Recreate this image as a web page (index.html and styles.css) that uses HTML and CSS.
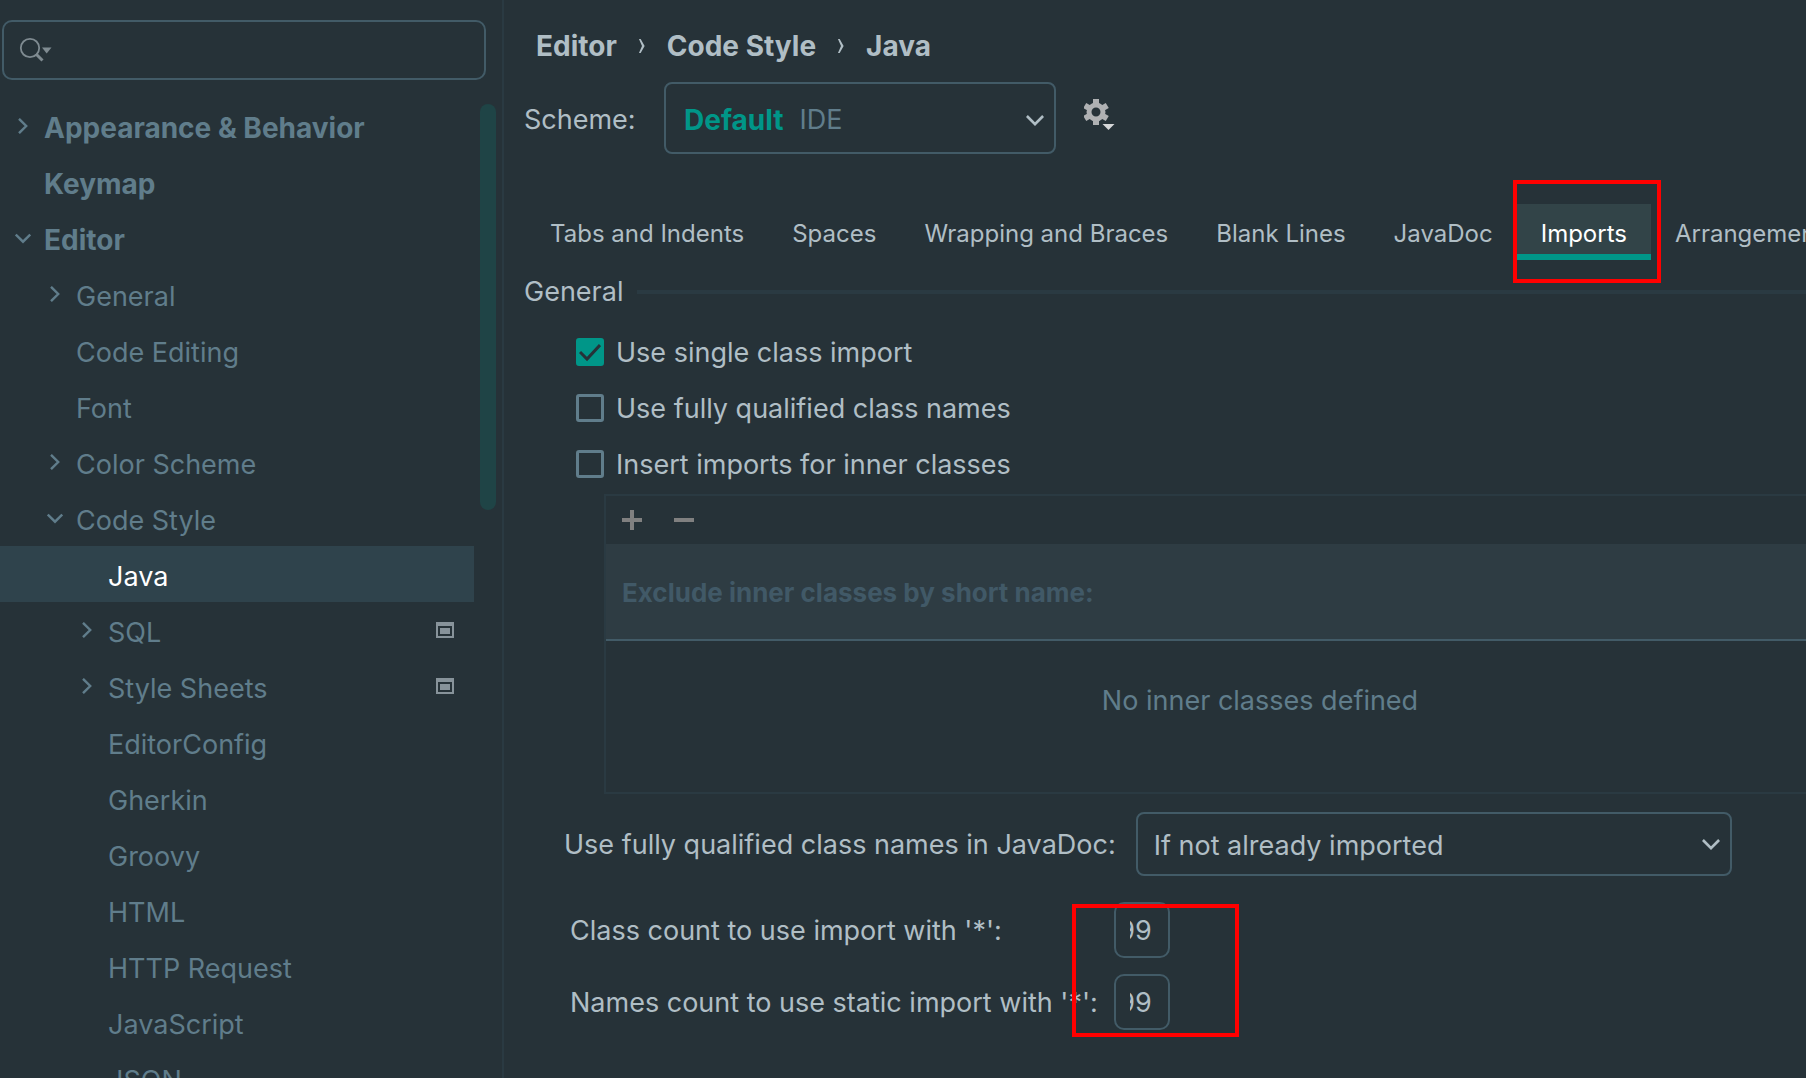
FILE: index.html
```
<!DOCTYPE html>
<html lang="en">
<head>
<meta charset="utf-8">
<title>Settings – Code Style – Java</title>
<link rel="stylesheet" href="styles.css">
</head>
<body>
<svg class="sprite" aria-hidden="true">
  <symbol id="right" viewBox="0 0 16 16"><path d="M4 0.8 L11.2 8 L4 15.2" fill="none" stroke="currentColor" stroke-width="2.4"/></symbol>
  <symbol id="down" viewBox="0 0 16 16"><path d="M0.8 4.5 L8 11.7 L15.2 4.5" fill="none" stroke="currentColor" stroke-width="2.4"/></symbol>
  <symbol id="crumb" viewBox="0 0 8 16"><path d="M0.500 0H2.500L7 8L2.500 16H0.500L4 8Z" fill="currentColor"/></symbol>
  <symbol id="project" viewBox="0 0 18 16"><path fill="currentColor" fill-rule="evenodd" d="M0 0H18V16H0Z M2 4V14H16V4Z M4 6H14V12H4Z"/></symbol>
</svg>
<div class="settings">
  <aside class="sidebar">
    <div class="search">
      <svg class="search-icon" viewBox="0 0 34 26" aria-hidden="true"><circle cx="12" cy="11" r="9.200" fill="none" stroke="#7f8b91" stroke-width="1.800"/><path d="M18 17 L24.500 23.500" stroke="#7f8b91" stroke-width="3"/><path d="M24 10.500H33.500L28.700 16.500Z" fill="#7f8b91"/></svg>
      <input type="text" class="search-input" aria-label="Search settings">
    </div>
    <div class="tree-area">
      <nav class="tree" aria-label="Settings categories">
        <a href="#" class="node top"><svg class="arrow"><use href="#right"/></svg><span class="node-name">Appearance &amp; Behavior</span></a>
        <a href="#" class="node top"><span class="arrow"></span><span class="node-name">Keymap</span></a>
        <a href="#" class="node top"><svg class="arrow"><use href="#down"/></svg><span class="node-name">Editor</span></a>
        <a href="#" class="node second"><svg class="arrow"><use href="#right"/></svg><span class="node-name">General</span></a>
        <a href="#" class="node second"><span class="arrow"></span><span class="node-name">Code Editing</span></a>
        <a href="#" class="node second"><span class="arrow"></span><span class="node-name">Font</span></a>
        <a href="#" class="node second"><svg class="arrow"><use href="#right"/></svg><span class="node-name">Color Scheme</span></a>
        <a href="#" class="node second"><svg class="arrow"><use href="#down"/></svg><span class="node-name">Code Style</span></a>
        <a href="#" class="node third selected" aria-current="page"><span class="arrow"></span><span class="node-name">Java</span></a>
        <a href="#" class="node third"><svg class="arrow"><use href="#right"/></svg><span class="node-name">SQL</span><svg class="project"><use href="#project"/></svg></a>
        <a href="#" class="node third"><svg class="arrow"><use href="#right"/></svg><span class="node-name">Style Sheets</span><svg class="project"><use href="#project"/></svg></a>
        <a href="#" class="node third"><span class="arrow"></span><span class="node-name">EditorConfig</span></a>
        <a href="#" class="node third"><span class="arrow"></span><span class="node-name">Gherkin</span></a>
        <a href="#" class="node third"><span class="arrow"></span><span class="node-name">Groovy</span></a>
        <a href="#" class="node third"><span class="arrow"></span><span class="node-name">HTML</span></a>
        <a href="#" class="node third"><span class="arrow"></span><span class="node-name">HTTP Request</span></a>
        <a href="#" class="node third"><span class="arrow"></span><span class="node-name">JavaScript</span></a>
        <a href="#" class="node third"><span class="arrow"></span><span class="node-name">JSON</span></a>
      </nav>
      <div class="scrollbar"><div class="thumb"></div></div>
    </div>
  </aside>
  <main class="content">
    <nav class="crumbs" aria-label="Breadcrumb">
      <a href="#">Editor</a><svg class="crumb-sep"><use href="#crumb"/></svg>
      <a href="#">Code Style</a><svg class="crumb-sep"><use href="#crumb"/></svg>
      <a href="#">Java</a>
    </nav>
    <div class="scheme">
      <span class="scheme-label" id="scheme-label">Scheme:</span>
      <button type="button" class="scheme-button" aria-labelledby="scheme-label scheme-name" aria-haspopup="listbox">
        <strong class="scheme-name" id="scheme-name">Default</strong><span class="scheme-kind">IDE</span>
        <svg class="chevron"><use href="#down"/></svg>
      </button>
      <button type="button" class="gear" aria-label="Scheme actions">
        <svg class="gear-icon" viewBox="0 0 32 32">
          <circle cx="12" cy="13" r="7" fill="none" stroke="#afb1b3" stroke-width="5"/>
          <path d="M12 0V5M12 21V26M0.740 6.500L5.070 9M18.930 17L23.260 19.500M0.740 19.500L5.070 17M18.930 9L23.260 6.500" stroke="#afb1b3" stroke-width="6"/>
          <path fill="#d5d7d8" d="M18.500 25H30.500L24.500 31Z"/>
        </svg>
      </button>
    </div>
    <div class="tabs" role="tablist">
      <button type="button" role="tab" class="tab">Tabs and Indents</button>
      <button type="button" role="tab" class="tab">Spaces</button>
      <button type="button" role="tab" class="tab">Wrapping and Braces</button>
      <button type="button" role="tab" class="tab">Blank Lines</button>
      <button type="button" role="tab" class="tab">JavaDoc</button>
      <span class="tab-slot"><button type="button" role="tab" class="tab active" aria-selected="true">Imports</button><span class="mark mark-tab"></span></span>
      <button type="button" role="tab" class="tab">Arrangement</button>
    </div>
    <h2 class="group-title">General</h2>
    <div class="checks">
      <label class="check"><input type="checkbox" class="box" checked><span class="check-text">Use single class import</span></label>
      <label class="check"><input type="checkbox" class="box"><span class="check-text">Use fully qualified class names</span></label>
      <label class="check"><input type="checkbox" class="box"><span class="check-text">Insert imports for inner classes</span></label>
    </div>
    <section class="exclusions">
      <div class="toolbar">
        <button type="button" class="tool" aria-label="Add"><svg class="tool-icon" viewBox="0 0 20 20"><path d="M0 10H20M10 0V20" stroke="#808080" stroke-width="4"/></svg></button>
        <button type="button" class="tool" aria-label="Remove"><svg class="tool-icon" viewBox="0 0 20 20"><path d="M0 10H20" stroke="#808080" stroke-width="4"/></svg></button>
      </div>
      <table class="classes">
        <thead><tr><th scope="col">Exclude inner classes by short name:</th></tr></thead>
        <tbody><tr><td>No inner classes defined</td></tr></tbody>
      </table>
    </section>
    <div class="javadoc">
      <label class="field-label" for="javadoc-names">Use fully qualified class names in JavaDoc:</label>
      <span class="select-wrap">
        <select id="javadoc-names" class="select"><option>If not already imported</option></select>
        <svg class="chevron"><use href="#down"/></svg>
      </span>
    </div>
    <div class="counts">
      <label class="field-label" for="class-count">Class count to use import with '*':</label>
      <span class="count"><input type="text" id="class-count" class="count-input" value="99"></span>
      <label class="field-label" for="names-count">Names count to use static import with '*':</label>
      <span class="count"><input type="text" id="names-count" class="count-input" value="99"></span>
      <span class="mark mark-counts"></span>
    </div>
  </main>
</div>
</body>
</html>
```
FILE: styles.css
```
* { box-sizing: border-box; }
body {
  margin: 0;
  height: 100vh;
  overflow: hidden;
  background: #263238;
  color: #b0bec5;
  font: 27px/36px Inter, "Liberation Sans", sans-serif;
}
button, input, select { font: inherit; color: inherit; background: none; border: 0; margin: 0; padding: 0; }
a { color: inherit; text-decoration: none; }
svg { display: block; flex: none; }
.sprite { position: absolute; width: 0; height: 0; }
.settings { display: flex; height: 100%; }

.sidebar {
  flex: none;
  display: flex;
  flex-direction: column;
  width: 504px;
  padding-top: 20px;
  border-right: 2px solid #2a3a42;
  color: #607d8b;
}
.search {
  flex: none;
  display: flex;
  align-items: center;
  height: 60px;
  margin: 0 16px 18px 2px;
  padding-left: 14px;
  border: 2px solid #425b67;
  border-radius: 10px;
}
.search-icon { width: 34px; height: 26px; }
.search-input { flex: 1; min-width: 0; outline: 0; }
.tree-area { flex: 1; display: flex; min-height: 0; }
.tree { flex: 1; overflow: hidden; }
.node {
  display: flex;
  align-items: center;
  gap: 13px;
  height: 56px;
  padding: 0 20px 0 15px;
}
.node-name { padding-top: 6px; }
.top { font-size: 28px; font-weight: 700; }
.top .node-name { padding-top: 4px; }
.second { padding-left: 47px; }
.third { padding-left: 79px; }
.arrow { width: 16px; height: 16px; }
.selected { background: #2f434c; color: #fff; }
.project { width: 18px; height: 16px; margin-left: auto; color: #87939a; }
.scrollbar { width: 28px; padding: 6px 0 0 6px; }
.thumb { width: 16px; height: 406px; border-radius: 8px; background: #1f4446; }

.content { flex: 1; min-width: 0; overflow: hidden; padding: 28px 0 0 20px; }
.crumbs { display: flex; align-items: center; gap: 21px; height: 36px; padding-left: 12px; font-size: 28px; font-weight: 700; }
.crumb-sep { width: 8px; height: 14px; }
.scheme { display: flex; align-items: center; height: 72px; margin-top: 18px; }
.scheme-label { width: 140px; padding-top: 4px; }
.scheme-button {
  display: flex;
  align-items: center;
  width: 392px;
  height: 72px;
  padding: 4px 10px 0 18px;
  border: 2px solid #425b67;
  border-radius: 8px;
}
.scheme-name { color: #009688; font-size: 28px; font-weight: 700; }
.scheme-kind { margin-left: 16px; color: #607d8b; }
.chevron { width: 18px; height: 18px; margin-left: auto; }
.gear { margin: 0 0 6px 28px; }
.gear-icon { width: 32px; height: 32px; }

.tabs { display: flex; margin: 50px 0 0 2px; font-size: 24px; }
.tab { flex: none; height: 56px; padding: 4px 24px 0; white-space: nowrap; }
.tab-slot { position: relative; flex: none; }
.active { background: #324448; border-bottom: 6px solid #009688; padding-top: 10px; color: #fff; }
.mark { position: absolute; border: 4px solid #f00; pointer-events: none; }
.mark-tab { inset: -24px -10px -23px -4px; }

.group-title { display: flex; align-items: center; gap: 14px; margin: 14px 0 0; font: inherit; }
.group-title::after { content: ""; flex: 1; height: 4px; background: #2a3a42; }
.checks { margin: 14px 0 0 52px; }
.check { display: flex; align-items: center; gap: 12px; height: 56px; }
.check-text, .field-label { padding-top: 2px; }
.box { appearance: none; width: 28px; height: 28px; border: 3px solid #607d8b; border-radius: 3px; }
.box:checked {
  border-color: #009688;
  background: #009688 url("data:image/svg+xml,%3Csvg xmlns='http://www.w3.org/2000/svg' viewBox='0 0 22 22'%3E%3Cpath d='M1 11L8 18L21 4' fill='none' stroke='%23263238' stroke-width='3'/%3E%3C/svg%3E") center / 22px 22px no-repeat;
}

.exclusions { margin: 2px 0 0 80px; border: 2px solid #2a3a42; border-right: 0; }
.toolbar { display: flex; gap: 32px; padding: 14px 16px; }
.tool-icon { width: 20px; height: 20px; }
.classes { width: 100%; border-collapse: collapse; }
.classes th { height: 96px; padding: 2px 16px 0; background: #2e3c43; border-bottom: 2px solid #425b67; color: #415967; font-size: 26px; font-weight: 700; text-align: left; }
.classes td { height: 152px; padding: 0 0 32px 108px; color: #607d8b; text-align: center; }

.javadoc { display: flex; align-items: center; gap: 20px; margin: 18px 0 0 40px; }
.select-wrap { display: flex; align-items: center; position: relative; width: 596px; }
.select { appearance: none; width: 100%; height: 64px; padding: 4px 40px 0 16px; border: 2px solid #425b67; border-radius: 8px; }
.select-wrap .chevron { position: absolute; right: 12px; pointer-events: none; }

.counts { position: relative; display: grid; grid-template-columns: auto 56px; width: fit-content; align-items: center; gap: 16px; margin: 26px 0 0 46px; }
.count { height: 56px; padding: 0 16px 0 14px; border: 2px solid #425b67; border-radius: 10px; }
.count-input { display: block; width: 100%; height: 52px; text-align: right; direction: rtl; outline: 0; }
.mark-counts { width: 167px; height: 133px; right: -69px; top: 2px; }
```
